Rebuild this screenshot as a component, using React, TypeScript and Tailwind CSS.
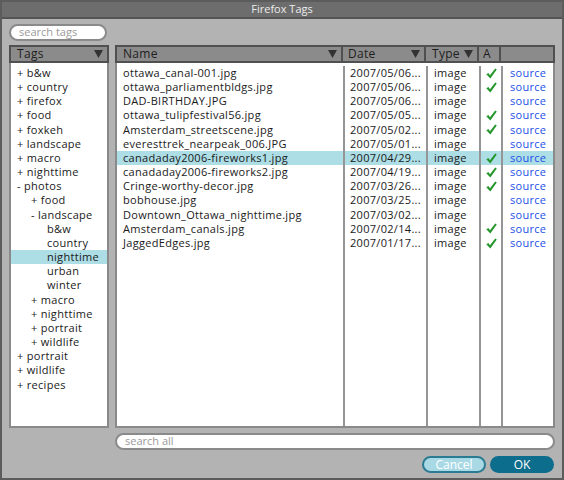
import React from 'react';

interface IFile {
	name: string;
	date: string;
	approved: boolean;
}

interface ITag {
	label: string;
	level: number;
	selected?: boolean;
}

const files: IFile[] = [
	{ name: 'ottawa_canal-001.jpg', date: '2007/05/06...', approved: true },
	{ name: 'ottawa_parliamentbldgs.jpg', date: '2007/05/06...', approved: true },
	{ name: 'DAD-BIRTHDAY.JPG', date: '2007/05/06...', approved: false },
	{ name: 'ottawa_tulipfestival56.jpg', date: '2007/05/05...', approved: true },
	{ name: 'Amsterdam_streetscene.jpg', date: '2007/05/02...', approved: true },
	{ name: 'everesttrek_nearpeak_006.JPG', date: '2007/05/01...', approved: false },
	{ name: 'canadaday2006-fireworks1.jpg', date: '2007/04/29...', approved: true },
	{ name: 'canadaday2006-fireworks2.jpg', date: '2007/04/19...', approved: true },
	{ name: 'Cringe-worthy-decor.jpg', date: '2007/03/26...', approved: true },
	{ name: 'bobhouse.jpg', date: '2007/03/25...', approved: false },
	{ name: 'Downtown_Ottawa_nighttime.jpg', date: '2007/03/02...', approved: false },
	{ name: 'Amsterdam_canals.jpg', date: '2007/02/14...', approved: true },
	{ name: 'JaggedEdges.jpg', date: '2007/01/17...', approved: true }
];

const selectedFile = 'canadaday2006-fireworks1.jpg';

const tags: ITag[] = [
	{ label: '+ b&w', level: 0 },
	{ label: '+ country', level: 0 },
	{ label: '+ firefox', level: 0 },
	{ label: '+ food', level: 0 },
	{ label: '+ foxkeh', level: 0 },
	{ label: '+ landscape', level: 0 },
	{ label: '+ macro', level: 0 },
	{ label: '+ nighttime', level: 0 },
	{ label: '- photos', level: 0 },
	{ label: '+ food', level: 1 },
	{ label: '- landscape', level: 1 },
	{ label: 'b&w', level: 2 },
	{ label: 'country', level: 2 },
	{ label: 'nighttime', level: 2, selected: true },
	{ label: 'urban', level: 2 },
	{ label: 'winter', level: 2 },
	{ label: '+ macro', level: 1 },
	{ label: '+ nighttime', level: 1 },
	{ label: '+ portrait', level: 1 },
	{ label: '+ wildlife', level: 1 },
	{ label: '+ portrait', level: 0 },
	{ label: '+ wildlife', level: 0 },
	{ label: '+ recipes', level: 0 }
];

const indent = ['pl-[6px]', 'pl-[20px]', 'pl-[36px]'];

const SortArrow = () => (
	<svg width="9" height="8" viewBox="0 0 9 8" className="shrink-0">
		<polygon points="0,0 9,0 4.5,8" fill="#333" />
	</svg>
);

const Check = () => (
	<svg width="11" height="11" viewBox="0 0 11 11">
		<path d="M0.3 6.2 L2.4 4.9 L4 7.3 L9.2 0.4 L10.8 1.5 L4.3 10.6 Z" fill="#23962a" />
	</svg>
);

// column cells share these widths in header, rows and filler
const cols = {
	name: 'w-[228px] pl-[6px]',
	date: 'w-[83px] pl-[5px]',
	type: 'w-[53px] pl-[6px]',
	a: 'w-[22px] justify-center',
	src: 'flex-1 pl-[7px]'
};

const Row = ({ file }: { file?: IFile }) => {
	const sel = file?.name === selectedFile;
	const cell = 'flex items-center border-r-2 border-[#959595] overflow-hidden whitespace-nowrap';
	return (
		<div className={`flex ${file ? 'h-[14.18px]' : 'flex-1'} ${sel ? 'bg-[#addde5]' : ''}`}>
			<div className={`${cell} ${cols.name}`}>{file?.name}</div>
			<div className={`${cell} ${cols.date}`}>{file?.date}</div>
			<div className={`${cell} ${cols.type}`}>{file ? 'image' : ''}</div>
			<div className={`${cell} ${cols.a}`}>{file?.approved && <Check />}</div>
			<div className={`flex items-center ${cols.src} text-[#1b50e8]`}>{file ? 'source' : ''}</div>
		</div>
	);
};

export default function App() {
	const headCell = 'flex h-[18px] items-center justify-between border-2 border-[#505050] bg-[#8b8b8b] pr-[4px] text-[12px] text-[#1e1e1e]';

	return (
		<div
			className="flex h-[480px] w-[564px] flex-col border-2 border-[#5c5c5c] bg-[#b3b3b3] text-[11px] tracking-[0.3px] text-[#1a1a1a]"
			style={{ fontFamily: '"Open Sans", sans-serif' }}
		>
			{/* title bar */}
			<div className="flex h-[15px] shrink-0 items-center justify-center bg-[#6d6d6d] text-[11px] tracking-normal text-[#ececec]">
				Firefox Tags
			</div>
			<div className="h-[2px] shrink-0 bg-[#545454]" />

			<div className="flex flex-1 flex-col px-[7px] pb-[6px] pt-[5px]">
				<div className="flex h-[17px] w-[98px] items-center rounded-full border-2 border-[#8a8a8a] bg-white pl-[8px] text-[11px] tracking-normal text-[#9a9a9a]">
					search tags
				</div>

				<div className="mt-[4px] flex h-[383px] gap-[6px]">
					{/* tags tree */}
					<div className="flex w-[100px] flex-col">
						<div className={`${headCell} pl-[6px]`}>
							<span>Tags</span>
							<SortArrow />
						</div>
						<div className="flex-1 border-2 border-t-0 border-[#8a8a8a] bg-white pt-[3px]">
							{tags.map((t, i) => (
								<div
									key={i}
									className={`flex h-[14.18px] items-center whitespace-nowrap ${indent[t.level]} ${t.selected ? 'bg-[#addde5]' : ''}`}
								>
									{t.label}
								</div>
							))}
						</div>
					</div>

					{/* files table */}
					<div className="flex flex-1 flex-col">
						<div className="flex">
							<div className={`${headCell} ${cols.name} pl-[6px]`}>
								<span>Name</span>
								<SortArrow />
							</div>
							<div className={`${headCell} ${cols.date} border-l-0`}>
								<span>Date</span>
								<SortArrow />
							</div>
							<div className={`${headCell} ${cols.type} border-l-0`}>
								<span>Type</span>
								<SortArrow />
							</div>
							<div className={`${headCell} ${cols.a} border-l-0 pr-0`}>A</div>
							<div className={`${headCell} flex-1 border-l-0`} />
						</div>
						<div className="flex flex-1 flex-col border-2 border-t-0 border-[#8a8a8a] bg-white pt-[3px]">
							{files.map(f => (
								<Row key={f.name} file={f} />
							))}
							<Row />
						</div>
					</div>
				</div>

				<div className="ml-[106px] mt-[5px] flex h-[17px] items-center rounded-full border-2 border-[#8a8a8a] bg-white pl-[8px] text-[11px] tracking-normal text-[#9a9a9a]">
					search all
				</div>

				<div className="mt-[6px] flex justify-end gap-[4px] pr-[1px]">
					<button className="flex h-[17px] w-[64px] items-center justify-center rounded-full border-2 border-[#2b7c93] bg-[#a9d9e5] text-[12px] tracking-normal text-white">
						Cancel
					</button>
					<button className="flex h-[17px] w-[64px] items-center justify-center rounded-full bg-[#0d6d8c] text-[12px] tracking-normal text-white">
						OK
					</button>
				</div>
			</div>
		</div>
	);
}
